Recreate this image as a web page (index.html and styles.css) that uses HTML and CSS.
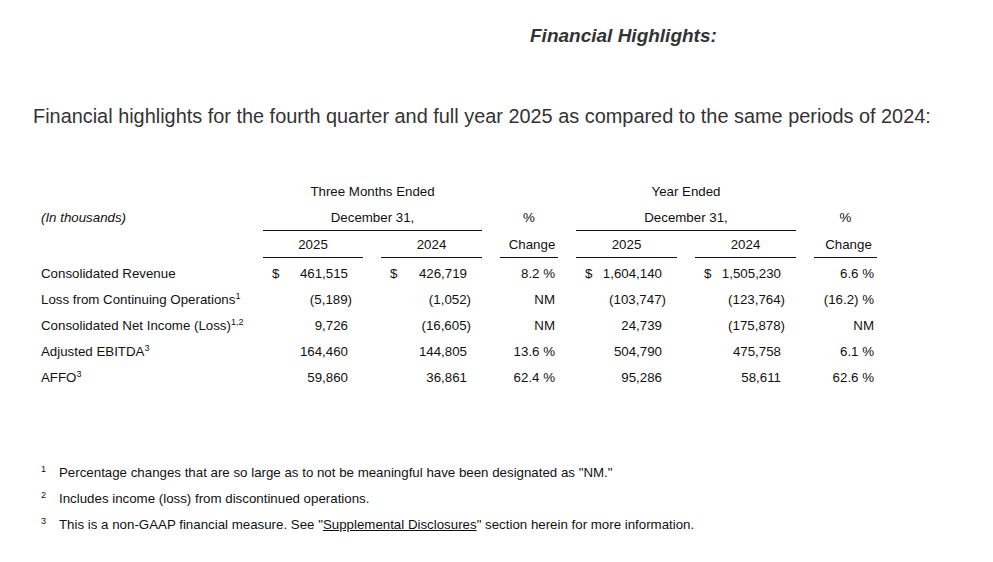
FILE: index.html
```html
<!DOCTYPE html>
<html lang="en">
<head>
<meta charset="utf-8">
<title>Financial Highlights</title>
<link rel="stylesheet" href="styles.css">
</head>
<body>
<div class="page">
  <h2 class="title">Financial Highlights:</h2>
  <p class="intro">Financial highlights for the fourth quarter and full year 2025 as compared to the same periods of 2024:</p>

  <table class="fin">
    <colgroup>
      <col class="c-label"><col class="c-num"><col class="c-num2"><col class="c-pct"><col class="c-num2"><col class="c-num2"><col class="c-pct2">
    </colgroup>
    <thead>
      <tr>
        <th></th>
        <th colspan="2" class="h">Three Months Ended</th>
        <th></th>
        <th colspan="2" class="h">Year Ended</th>
        <th></th>
      </tr>
      <tr>
        <th class="units">(In thousands)</th>
        <th colspan="2" class="h rule">December 31,</th>
        <th class="h">%</th>
        <th colspan="2" class="h rule">December 31,</th>
        <th class="h">%</th>
      </tr>
      <tr>
        <th></th>
        <th class="h rule">2025</th>
        <th class="h rule">2024</th>
        <th class="h rule pch">Change</th>
        <th class="h rule">2025</th>
        <th class="h rule">2024</th>
        <th class="h rule pch">Change</th>
      </tr>
    </thead>
    <tbody>
      <tr class="first">
        <td class="lbl">Consolidated Revenue</td>
        <td class="n"><span class="cur">$</span>461,515</td>
        <td class="n"><span class="cur">$</span>426,719</td>
        <td class="p">8.2 %</td>
        <td class="n"><span class="cur">$</span>1,604,140</td>
        <td class="n"><span class="cur">$</span>1,505,230</td>
        <td class="p">6.6 %</td>
      </tr>
      <tr>
        <td class="lbl">Loss from Continuing Operations<sup class="fn">1</sup></td>
        <td class="n">(5,189<span class="cp">)</span></td>
        <td class="n">(1,052<span class="cp">)</span></td>
        <td class="p">NM</td>
        <td class="n">(103,747<span class="cp">)</span></td>
        <td class="n">(123,764<span class="cp">)</span></td>
        <td class="p">(16.2) %</td>
      </tr>
      <tr>
        <td class="lbl">Consolidated Net Income (Loss)<sup class="fn">1,2</sup></td>
        <td class="n">9,726</td>
        <td class="n">(16,605<span class="cp">)</span></td>
        <td class="p">NM</td>
        <td class="n">24,739</td>
        <td class="n">(175,878<span class="cp">)</span></td>
        <td class="p">NM</td>
      </tr>
      <tr>
        <td class="lbl">Adjusted EBITDA<sup class="fn">3</sup></td>
        <td class="n">164,460</td>
        <td class="n">144,805</td>
        <td class="p">13.6 %</td>
        <td class="n">504,790</td>
        <td class="n">475,758</td>
        <td class="p">6.1 %</td>
      </tr>
      <tr>
        <td class="lbl">AFFO<sup class="fn">3</sup></td>
        <td class="n">59,860</td>
        <td class="n">36,861</td>
        <td class="p">62.4 %</td>
        <td class="n">95,286</td>
        <td class="n">58,611</td>
        <td class="p">62.6 %</td>
      </tr>
    </tbody>
  </table>

  <div class="notes">
    <div class="note"><span class="mark">1</span><span>Percentage changes that are so large as to not be meaningful have been designated as "NM."</span></div>
    <div class="note"><span class="mark">2</span><span>Includes income (loss) from discontinued operations.</span></div>
    <div class="note"><span class="mark">3</span><span>This is a non-GAAP financial measure. See "<a class="link" href="#">Supplemental Disclosures</a>" section herein for more information.</span></div>
  </div>
</div>
</body>
</html>
```

FILE: styles.css
```css
html, body {
  margin: 0;
  padding: 0;
  background: #ffffff;
}

body {
  font-family: "Liberation Sans", Arial, sans-serif;
  color: #111;
}

.page {
  width: 993px;
  padding-top: 24px;
}

.title {
  margin: 0;
  padding-left: 530px;
  font-family: "Liberation Sans", Arial, sans-serif;
  font-size: 19px;
  line-height: 24px;
  font-weight: bold;
  font-style: italic;
  color: #333;
}

.intro {
  margin: 56px 0 0 0;
  padding-left: 33px;
  font-family: "Liberation Sans", Arial, sans-serif;
  font-size: 19.9px;
  line-height: 24px;
  color: #333;
}

.fin {
  margin: 50px 0 0 23px;
  border-collapse: separate;
  border-spacing: 18px 0;
  table-layout: fixed;
  width: 872px;
  font-size: 13.3px;
  color: #111;
}

.c-label { width: 204px; }
.c-num { width: 100px; }
.c-num2 { width: 101px; }
.c-pct { width: 58px; }
.c-pct2 { width: 63px; }

.fin th,
.fin td {
  padding: 0;
  height: 26px;
  font-weight: normal;
  white-space: nowrap;
  vertical-align: middle;
}

.fin th.h {
  text-align: center;
}

.fin th.pch {
  padding-left: 6px;
}

.fin th.rule {
  border-bottom: 1px solid #111;
}

.fin th.units {
  text-align: left;
  font-style: italic;
}

.fin td.lbl {
  text-align: left;
}

.fin td.n {
  text-align: right;
  padding-right: 15px;
  padding-left: 9px;
}

.fin td.p {
  text-align: right;
  padding-right: 3px;
}

.fin tr.first td {
  padding-top: 2px;
}

.cur {
  float: left;
}

.cp {
  margin-right: -4px;
}

.fn {
  font-size: 9px;
  line-height: 0;
  vertical-align: 5px;
}

.notes {
  margin-top: 69px;
  padding-left: 41px;
  font-size: 13.3px;
  color: #111;
}

.note {
  display: flex;
  height: 26px;
  align-items: center;
}

.mark {
  width: 18px;
  font-size: 9px;
  align-self: flex-start;
  padding-top: 5px;
}

.link {
  color: #111;
  text-decoration: underline;
}
```
